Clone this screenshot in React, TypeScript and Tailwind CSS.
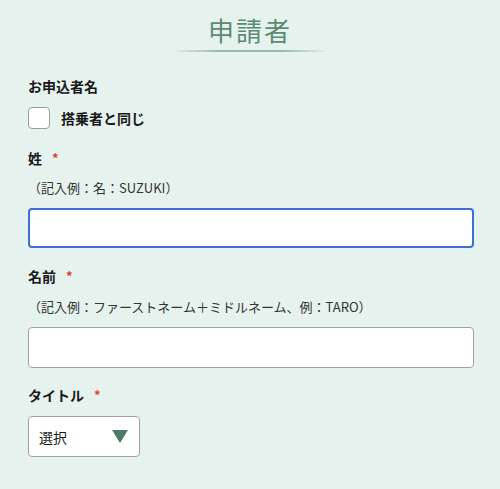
export default function App() {
  const font = { fontFamily: '"Noto Sans CJK JP", "Liberation Sans", sans-serif' };

  return (
    <main className="min-h-[489px] w-[500px] bg-[#e6f2ee] px-[28px] pt-[12px] text-[#1a1a1a]" style={font}>
      <div className="flex flex-col items-center">
        <h1 className="text-[26px] leading-[36px] tracking-[2px] text-[#5b8a74]">申請者</h1>
        <div className="mt-[2px] h-[2px] w-[158px] bg-[linear-gradient(to_right,rgba(91,138,116,0),rgba(91,138,116,0.55)_30%,rgba(91,138,116,0.55)_70%,rgba(91,138,116,0))]" />
      </div>

      <p className="mt-[24px] text-[14px] font-bold leading-[20px]">お申込者名</p>
      <label className="mt-[11px] flex items-center gap-[11px]">
        <span className="h-[22px] w-[22px] rounded-[4px] border border-[#9a9a9a] bg-white" />
        <span className="text-[14px] font-bold leading-[20px]">搭乗者と同じ</span>
      </label>

      <p className="mt-[19px] flex items-center text-[14px] font-bold leading-[20px]">
        姓<span className="ml-[10px] text-[13px] text-[#e0402f]">*</span>
      </p>
      <p className="mt-[11px] text-[13px] leading-[18px] text-[#333]">（記入例：名：SUZUKI）</p>
      <div className="mt-[11px] h-[40px] w-[446px] rounded-[4px] border-2 border-[#3d6fd4] bg-white" />

      <p className="mt-[18px] flex items-center text-[14px] font-bold leading-[20px]">
        名前<span className="ml-[10px] text-[13px] text-[#e0402f]">*</span>
      </p>
      <p className="mt-[12px] text-[13px] leading-[18px] text-[#333]">
        （記入例：ファーストネーム＋ミドルネーム、例：TARO）
      </p>
      <div className="mt-[11px] h-[41px] w-[446px] rounded-[4px] border border-[#a0a0a0] bg-white" />

      <p className="mt-[17px] flex items-center text-[14px] font-bold leading-[20px]">
        タイトル<span className="ml-[10px] text-[13px] text-[#e0402f]">*</span>
      </p>
      <div className="mt-[11px] flex h-[41px] w-[112px] items-center justify-between rounded-[4px] border border-[#a0a0a0] bg-white pl-[10px] pr-[11px]">
        <span className="text-[14px] leading-[20px]">選択</span>
        <svg width="16" height="13" viewBox="0 0 16 13">
          <polygon points="0,0 16,0 8,13" fill="#4f7a66" />
        </svg>
      </div>
    </main>
  );
}
